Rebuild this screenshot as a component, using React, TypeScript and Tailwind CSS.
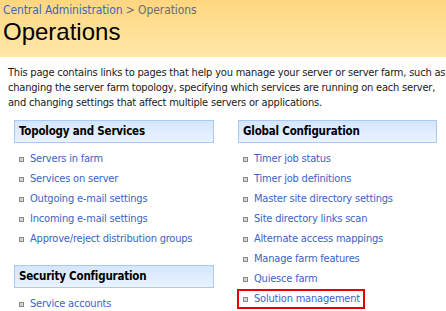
const topology = [
  "Servers in farm",
  "Services on server",
  "Outgoing e-mail settings",
  "Incoming e-mail settings",
  "Approve/reject distribution groups",
];

const security = ["Service accounts"];

const global = [
  "Timer job status",
  "Timer job definitions",
  "Master site directory settings",
  "Site directory links scan",
  "Alternate access mappings",
  "Manage farm features",
  "Quiesce farm",
  "Solution management",
];

function SectionHeader({ title }: { title: string }) {
  return (
    <div className="h-[23px] border border-[#a7cbf6] bg-gradient-to-b from-[#d5e6fd] to-[#eaf3fe] px-[4px] flex items-center text-[11.5px] tracking-[-0.2px] font-bold text-black">
      {title}
    </div>
  );
}

function LinkItem({ label, highlight }: { label: string; highlight?: boolean }) {
  return (
    <li
      className={`h-[20px] flex items-center gap-[6px] ${
        highlight ? "w-fit border-2 border-[#e80000] -ml-[1px] pl-[4px] pr-[3px]" : "pl-[5px]"
      }`}
    >
      <span className="w-[5px] h-[5px] border border-[#8a8a8a] bg-[#d4d4d4] shrink-0" />
      <a className="text-[11px] tracking-[-0.2px] text-[#3a64c5] whitespace-nowrap">{label}</a>
    </li>
  );
}

export default function App() {
  return (
    <div className="w-[446px] h-[311px] bg-white overflow-hidden font-['DejaVu_Sans_Condensed','Liberation_Sans',Arial,sans-serif]">
      <div className="h-[57px] bg-gradient-to-b from-[#ffd67f] to-[#ffe8a9] pl-[3px] pt-[2px]">
        <div className="text-[12px] leading-[16px] tracking-[-0.1px]">
          <span className="text-[#3d67c4]">Central Administration</span>
          <span className="text-[#6d6d6d]"> &gt; Operations</span>
        </div>
        <h1 className="text-[24px] leading-[28px] text-black font-['Liberation_Sans',Arial,sans-serif]">
          Operations
        </h1>
      </div>

      <p className="px-[8px] pt-[8px] text-[11px] leading-[15px] tracking-[-0.2px] text-[#1a1a1a] whitespace-nowrap">
        This page contains links to pages that help you manage your server or server farm, such as
        <br />
        changing the server farm topology, specifying which services are running on each server,
        <br />
        and changing settings that affect multiple servers or applications.
      </p>

      <div className="grid grid-cols-[200px_199px] gap-x-[24px] pl-[14px] mt-[10px]">
        <div>
          <SectionHeader title="Topology and Services" />
          <ul className="mt-[6px]">
            {topology.map((t) => (
              <LinkItem key={t} label={t} />
            ))}
          </ul>
          <div className="mt-[16px]">
            <SectionHeader title="Security Configuration" />
            <ul className="mt-[6px]">
              {security.map((t) => (
                <LinkItem key={t} label={t} />
              ))}
            </ul>
          </div>
        </div>
        <div>
          <SectionHeader title="Global Configuration" />
          <ul className="mt-[6px]">
            {global.map((t) => (
              <LinkItem key={t} label={t} highlight={t === "Solution management"} />
            ))}
          </ul>
        </div>
      </div>
    </div>
  );
}
